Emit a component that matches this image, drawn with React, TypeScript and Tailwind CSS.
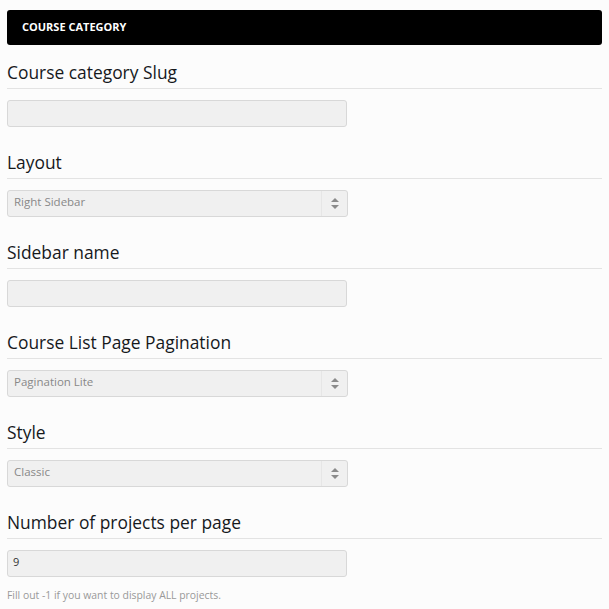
import { ReactNode } from "react";

const FONT = { fontFamily: '"Open Sans", "Noto Sans", sans-serif' };

function Arrows() {
  return (
    <svg width="8" height="11" viewBox="0 0 8 11" aria-hidden="true">
      <path d="M4 0 L8 4 L0 4 Z" fill="#8a8a8a" />
      <path d="M0 7 L8 7 L4 11 Z" fill="#8a8a8a" />
    </svg>
  );
}

function Field({ label, first, children }: { label: string; first?: boolean; children: ReactNode }) {
  return (
    <div className={first ? "mt-[15px]" : "mt-[23px]"}>
      <h3 className="border-b border-[#e3e3e3] pb-[4px] text-[17.4px] font-medium leading-[24px] text-[#16191c]">{label}</h3>
      <div className="mt-[11px]">{children}</div>
    </div>
  );
}

function TextBox({ value = "" }: { value?: string }) {
  return (
    <div className="flex h-[27px] w-[340px] items-center rounded-[3px] border border-[#d8d8d8] bg-[#f0f0f0] px-[5px] pb-[2px] text-[11px] text-[#333]">
      {value}
    </div>
  );
}

function SelectBox({ value }: { value: string }) {
  return (
    <div className="flex h-[27px] w-[341px] items-center rounded-[3px] border border-[#d8d8d8] bg-[#f0f0f0] text-[11.5px] text-[#888]">
      <span className="flex-1 px-[6px] pb-[3px]">{value}</span>
      <span className="flex h-full w-[26px] items-center justify-center border-l border-[#e6e6e6]">
        <Arrows />
      </span>
    </div>
  );
}

export default function App() {
  return (
    <div className="min-h-[609px] bg-[#fcfcfc] px-[7px] pt-[10px]" style={FONT}>
      <div className="flex h-[35px] w-[595px] items-center rounded-[3px] bg-black px-[15px] text-[11px] font-bold text-white">
        COURSE CATEGORY
      </div>
      <div className="w-[595px]">
        <Field label="Course category Slug" first>
          <TextBox />
        </Field>
        <Field label="Layout">
          <SelectBox value="Right Sidebar" />
        </Field>
        <Field label="Sidebar name">
          <TextBox />
        </Field>
        <Field label="Course List Page Pagination">
          <SelectBox value="Pagination Lite" />
        </Field>
        <Field label="Style">
          <SelectBox value="Classic" />
        </Field>
        <Field label="Number of projects per page">
          <TextBox value="9" />
        </Field>
        <p className="mt-[11px] text-[10.4px] text-[#999]">Fill out -1 if you want to display ALL projects.</p>
      </div>
    </div>
  );
}
